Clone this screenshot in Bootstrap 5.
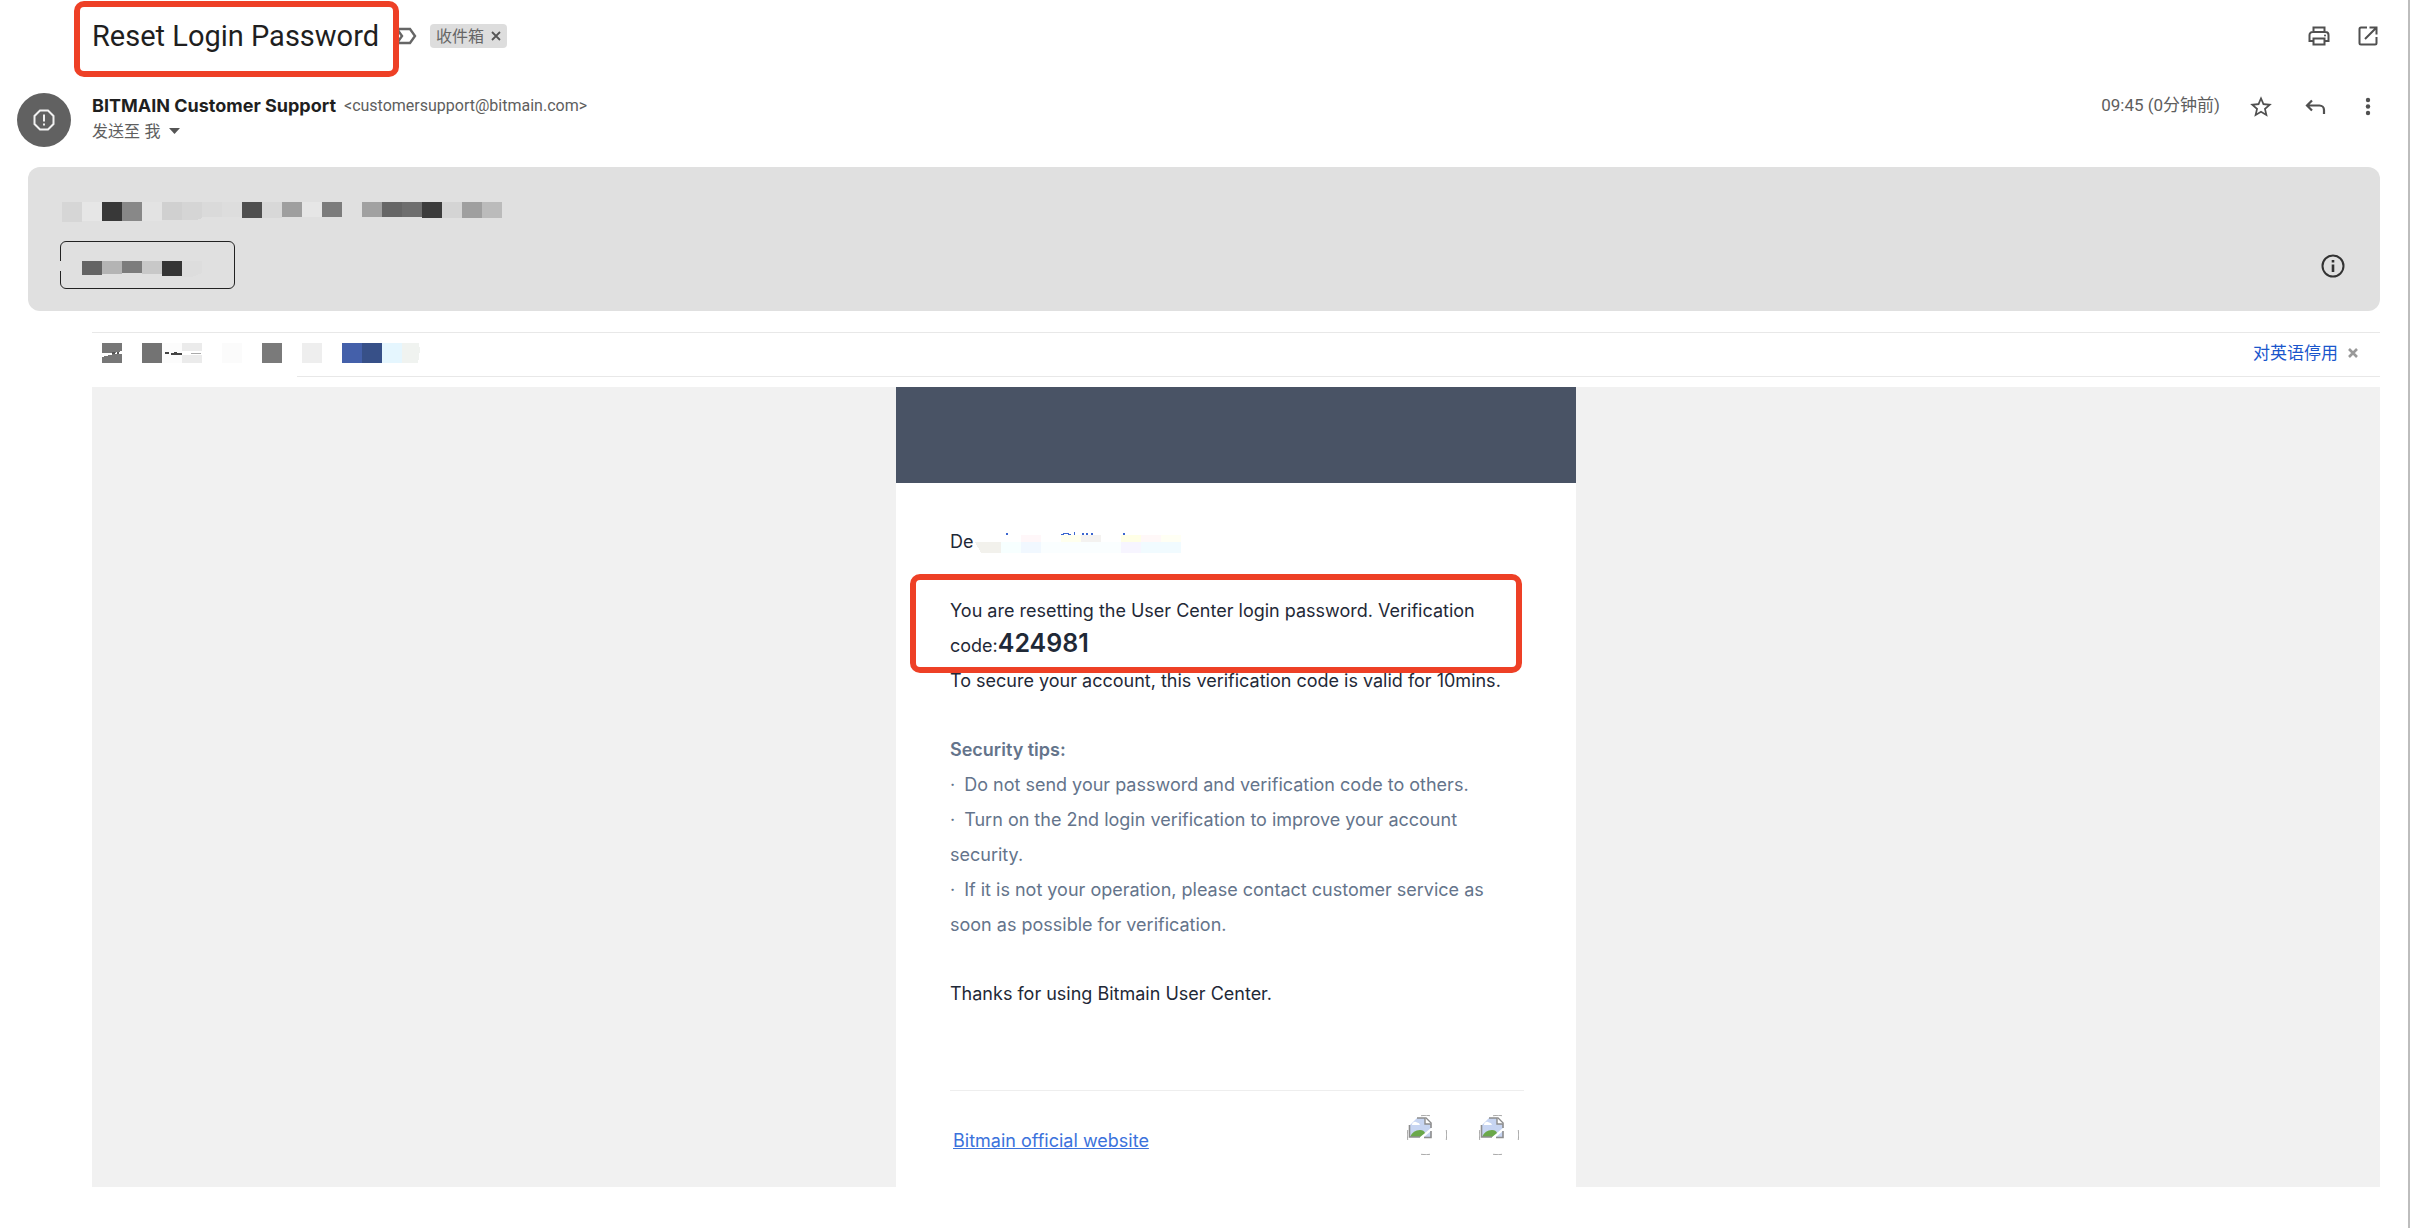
<!DOCTYPE html>
<html lang="zh-CN">
<head>
<meta charset="utf-8">
<meta name="viewport" content="width=device-width, initial-scale=1">
<title>Reset Login Password</title>
<link rel="stylesheet" href="https://cdn.jsdelivr.net/npm/bootstrap@5.3.0/dist/css/bootstrap.min.css">
<style>
body{font-family:Inter,"Noto Sans CJK SC",sans-serif;color:#1f1f1f;background:#fff;font-size:16px;line-height:24px}
svg{display:block;flex:none}
.mail-view{min-height:100vh;border-right:2px solid #bdbdbd;padding-right:28px}
.subject-row{height:72px;padding-left:92px}
.subject{font-family:Roboto,sans-serif;font-size:29px;line-height:40px;font-weight:400}
.ring{position:relative}
.ring::after{content:"";position:absolute;border:6px solid #ee4026;border-radius:10px;pointer-events:none;z-index:2}
.ring-subject::after{inset:-15px -20px -21px -18px}
.ring-code::after{inset:-19px 2px -10px -40px}
.tag-arrow{margin-left:16px}
.inbox-tag{background:#ddd;color:#666;border-radius:4px;height:24px;padding:0 6px;margin-left:13px;gap:7px;font-size:16px}
.icon-btn{border:0;background:none;padding:0;color:#505050;display:block}
.actions{gap:25px}
.actions-mail{gap:28px}
.sender-row{padding-left:17px;height:95px;padding-top:21px}
.avatar{width:54px;height:54px;border-radius:50%;background:#616161;margin-right:21px}
.sender{font-size:18px;font-weight:700;line-height:26px}
.addr{font-family:Roboto,sans-serif;font-size:16px;color:#5e5e5e}
.when{font-family:Roboto,"Noto Sans CJK SC",sans-serif;font-size:17px}
.soft{color:#5e5e5e}
.notice{background:#e0e0e0;border-radius:12px;margin-left:28px;padding:35px 35px 22px 32px}
.notice-btn{display:block;width:175px;height:48px;padding:8px 0 0 21px;border:1px solid #222;border-radius:6px;background:none;position:relative}
.notice-btn::before{content:"";position:absolute;left:-1px;top:19px;width:1px;height:10px;background:#e0e0e0}
.notice-info{margin-top:40px}
.translate{margin:21px 0 10px 92px;border-top:1px solid #e8e8e8;height:45px;padding:0 22px 4px 10px;position:relative}
.translate::after{content:"";position:absolute;left:205px;right:0;bottom:0;height:1px;background:#e8e8e8}
.translate a{font-size:17px;color:#1a56cc}
.translate button{margin-left:10px}
.backdrop{margin-left:92px;background:#f1f1f1}
.letter{width:680px;background:#fff;color:#1f2937;font-size:18px;line-height:35px}
.letter-head{height:96px;background:#495365}
.letter-main{padding:41px 52px 0 54px}
.letter p{margin:0 0 34px}
.letter .greet{height:35px}
.code-no{font-size:25px;font-weight:600;line-height:1}
.tips{color:#64748b}
.letter-foot{border-top:1px solid #eee;margin-top:79px;padding:24px 5px 22px 3px;height:97px}
.letter-foot a{color:#3b72dc}
.letter-foot div{gap:32px}
</style>
<script src="https://cdn.jsdelivr.net/npm/bootstrap@5.3.0/dist/js/bootstrap.bundle.min.js"></script>
</head>
<body>
<main class="mail-view">
  <header class="subject-row d-flex align-items-center">
    <div class="ring ring-subject"><h1 class="subject m-0">Reset Login Password</h1></div>
    <svg class="tag-arrow" width="22" height="18" viewBox="0 0 22 18" fill="none" stroke="#666" stroke-width="2.4"><path d="M2 2h13l5 7-5 7H2l5-7z"/></svg>
    <span class="inbox-tag d-flex align-items-center">收件箱
      <button class="icon-btn" aria-label="移除标签"><svg width="10" height="10" viewBox="0 0 10 10" stroke="#555" stroke-width="1.8"><path d="M1 1l8 8M9 1l-8 8"/></svg></button>
    </span>
    <div class="actions d-flex ms-auto align-items-center">
      <button class="icon-btn" aria-label="打印"><svg width="24" height="24" viewBox="0 0 24 24" fill="none" stroke="currentColor" stroke-width="2"><path d="M6.500 8V3.500h11V8M6.500 17H2.500v-6a3 3 0 0 1 3-3h13a3 3 0 0 1 3 3v6h-4M6.500 14.500h11v6h-11z"/><circle cx="18" cy="11.500" r="1" fill="currentColor" stroke="none"/></svg></button>
      <button class="icon-btn" aria-label="在新窗口中打开"><svg width="24" height="24" viewBox="0 0 24 24" fill="none" stroke="currentColor" stroke-width="2"><path d="M11 3.500H5a1.500 1.500 0 0 0-1.500 1.500v14A1.500 1.500 0 0 0 5 20.500h14a1.500 1.500 0 0 0 1.500-1.500v-6M13.500 3.500h7v7M20.500 3.500L9 15"/></svg></button>
    </div>
  </header>

  <section class="sender-row d-flex">
    <div class="avatar d-flex align-items-center justify-content-center flex-shrink-0">
      <svg width="22" height="22" viewBox="0 0 22 22" fill="none" stroke="#f1f1f1" stroke-width="2"><path d="M7 1.500h8L20.500 7v8L15 20.500H7L1.500 15V7z"/><path d="M11 5.500v7M11 14.500v2"/></svg>
    </div>
    <div>
      <div class="d-flex align-items-center gap-2"><span class="sender">BITMAIN Customer Support</span><span class="addr">&lt;customersupport@bitmain.com&gt;</span></div>
      <div class="d-flex align-items-center gap-2 soft">发送至 我 <svg width="11" height="6" viewBox="0 0 11 6" fill="#555"><path d="M0 0h11L5.500 6z"/></svg></div>
    </div>
    <div class="actions-mail d-flex align-items-start ms-auto">
      <span class="when soft">09:45 (0分钟前)</span>
      <button class="icon-btn" aria-label="加星标"><svg width="26" height="28" viewBox="0 0 24 24" fill="currentColor"><path d="M22 9.240l-7.190-.62L12 2 9.190 8.630 2 9.240l5.460 4.730L5.820 21 12 17.270 18.180 21l-1.630-7.030L22 9.240zM12 15.400l-3.760 2.270 1-4.280-3.320-2.880 4.380-.38L12 6.100l1.710 4.040 4.380.38-3.320 2.880 1 4.280L12 15.400z"/></svg></button>
      <button class="icon-btn" aria-label="回复"><svg width="26" height="28" viewBox="0 0 26 28" fill="none" stroke="currentColor" stroke-width="2.200"><path d="M10 7.500L5 12.500l5 5M5 12.500h12.500a4.500 4.500 0 0 1 4.500 4.500v4"/></svg></button>
      <button class="icon-btn" aria-label="更多"><svg width="24" height="28" viewBox="0 0 24 28" fill="currentColor"><circle cx="12" cy="7" r="2.200"/><circle cx="12" cy="13.500" r="2.200"/><circle cx="12" cy="20" r="2.200"/></svg></button>
    </div>
  </section>

  <section class="notice d-flex align-items-center justify-content-between">
    <div>
      <svg class="mb-3" width="444" height="23" shape-rendering="crispEdges" aria-hidden="true">
        <path fill="#d6d6d6" d="M2 0h20v20H2z"/><path fill="#e6e6e6" d="M22 0h20v19H22z"/><path fill="#383838" d="M42 0h20v19H42z"/><path fill="#888" d="M62 0h20v19H62z"/><path fill="#e3e3e3" d="M82 0h20v19H82z"/><path fill="#d0d0d0" d="M102 0h20v18h-20z"/><path fill="#d5d5d5" d="M122 0h20v16l-6 2h-14z"/><path fill="#dadada" d="M142 0h20v15h-20z"/><path fill="#ddd" d="M162 0h20v15h-20z"/><path fill="#4f4f4f" d="M182 0h20v16h-20z"/><path fill="#d8d8d8" d="M202 0h20v16h-20z"/><path fill="#9f9f9f" d="M222 0h20v15h-20z"/><path fill="#e6e6e6" d="M242 0h20v15h-20z"/><path fill="#7c7c7c" d="M262 0h20v15h-20z"/><path fill="#a1a1a1" d="M302 0h20v15h-20z"/><path fill="#666" d="M322 0h20v15h-20z"/><path fill="#6e6e6e" d="M342 0h20v15h-20z"/><path fill="#3c3c3c" d="M362 0h20v16h-20z"/><path fill="#d4d4d4" d="M382 0h20v16h-20z"/><path fill="#9f9f9f" d="M402 0h20v16h-20z"/><path fill="#bbb" d="M422 0h20v16h-20z"/>
      </svg>
      <button class="notice-btn" aria-label="已隐藏"><svg width="122" height="16" shape-rendering="crispEdges"><path fill="#646464" d="M0 0h20v14H0z"/><path fill="#b4b4b4" d="M20 0h20v13H20z"/><path fill="#7c7c7c" d="M40 0h20v12H40z"/><path fill="#c8c8c8" d="M60 0h20v13H60z"/><path fill="#353535" d="M80 0h20v15H80z"/><path fill="#ddd" d="M100 0h20v12l-10 4h-10z"/></svg></button>
    </div>
    <button class="icon-btn notice-info" aria-label="信息"><svg width="24" height="24" viewBox="0 0 24 24" fill="none" stroke="#333" stroke-width="2"><circle cx="12" cy="12" r="10.500"/><path d="M12 10.500V18M12 6v2.500" stroke-width="2.600"/></svg></button>
  </section>

  <section class="translate d-flex align-items-center">
    <svg width="322" height="20" shape-rendering="crispEdges" aria-hidden="true">
      <path fill="#777" d="M0 0h20v8l-8 2H0zM0 14l12-3h8v9H0z"/><path fill="#555" d="M10 9h3v2h-3zM15 9h2v2h-2z"/><path fill="#737373" d="M40 0h20v20H40z"/><path fill="#fcfcfc" d="M60 0h20v20H60z"/><path fill="#ebebeb" d="M80 0h20v20H80z"/><path fill="#fff" d="M80 8h20v4H80z"/><path fill="#444" d="M63 9h4v2h-4zM69 10h11v2H69zM72 9h3v1h-3z"/><path fill="#aaa" d="M89 10h10v1H89z"/><path fill="#fbfbfb" d="M120 0h20v20h-20z"/><path fill="#7a7a7a" d="M160 0h20v20h-20z"/><path fill="#eee" d="M200 0h20v20h-20z"/><path fill="#4460aa" d="M240 0h20v20h-20z"/><path fill="#375088" d="M260 0h20v20h-20z"/><path fill="#e5f6fe" d="M280 0h20v20h-20z"/><path fill="#f0f3f0" d="M300 0h17l1 7-2 13h-16z"/>
    </svg>
    <a class="ms-auto text-decoration-none" href="#">对英语停用</a>
    <button class="icon-btn" aria-label="关闭"><svg width="10" height="10" viewBox="0 0 10 10" stroke="#999" stroke-width="2.600"><path d="M1 1l8 8M9 1l-8 8"/></svg></button>
  </section>

  <section class="backdrop">
    <article class="letter mx-auto">
      <div class="letter-head"></div>
      <div class="letter-main">
        <p class="greet d-flex align-items-center">De<svg width="210" height="35" shape-rendering="crispEdges" aria-hidden="true">
          <path fill="#f2f1ec" d="M2 18h26v11H8z"/><path fill="#f7ffff" d="M28 18h20v11H28z"/><path fill="#f1f8ff" d="M48 18h20v11H48z"/><path fill="#fafeff" d="M68 18h80v11H68z"/><path fill="#f7f5ff" d="M148 18h20v11h-20z"/><path fill="#f1fbff" d="M168 18h40v11h-40z"/><path fill="#fff7f9" d="M48 11h20v7H48z"/><path fill="#ffffee" d="M88 11h20v7H88z"/><path fill="#f4f2f0" d="M108 11h20v7h-20z"/><path fill="#ffffe6" d="M148 11h20v7h-20z"/><path fill="#fff8f8" d="M168 11h20v7h-20z"/><path fill="#fffff4" d="M188 11h20v7h-20z"/><path fill="#3b66d0" d="M33 9h2v2h-2zM90 9h6v1h-6zM88 10h3v1h-3zM95 10h3v1h-3zM101 8h1v3h-1zM109 9h2v2h-2zM113 9h2v2h-2zM118 9h2v2h-2zM150 9h2v2h-2z"/>
        </svg></p>
        <div class="ring ring-code">You are resetting the User Center login password. Verification<br>code:<strong class="code-no">424981</strong></div>
        <p>To secure your account, this verification code is valid for 10mins.</p>
        <p class="tips"><strong class="fw-semibold">Security tips:</strong><br>·&ensp;Do not send your password and verification code to others.<br>·&ensp;Turn on the 2nd login verification to improve your account<br>security.<br>·&ensp;If it is not your operation, please contact customer service as soon as possible for verification.</p>
        <p>Thanks for using Bitmain User Center.</p>
        <footer class="letter-foot d-flex justify-content-between">
          <a class="align-self-center" href="#">Bitmain official website</a>
          <div class="d-flex">
            <svg width="40" height="40" viewBox="0 0 40 40" role="img" aria-label="image"><g id="missing"><path d="M3 22V10l7-7h8l6 6v4L13 22z" fill="#c7d5f2"/><path d="M5 9.500a3 3 0 0 1 5-2 3 3 0 0 1 3 2.500H5z" fill="#fff"/><path d="M3 22q3-7 10-7 4 0 5 3l-5 4z" fill="#6aa84a"/><path d="M17 22l7-6v6z" fill="#c7d5f2"/><path d="M2.500 10v12H13M17 22.500h7V16M24 13V8l-5-5H10" fill="none" stroke="#8d8d8d" stroke-width="1.600"/><path d="M18 3v6h6" fill="#fff" stroke="#8d8d8d" stroke-width="1.400"/><path d="M14 .7q6-.8 9 0M14 39.300q6 .8 9 0M.7 15q-.8 5 0 10M39.300 15q.8 5 0 10" fill="none" stroke="#aaa"/></g></svg>
            <svg width="40" height="40" viewBox="0 0 40 40" role="img" aria-label="image"><use href="#missing"/></svg>
          </div>
        </footer>
      </div>
    </article>
  </section>
</main>
</body>
</html>
